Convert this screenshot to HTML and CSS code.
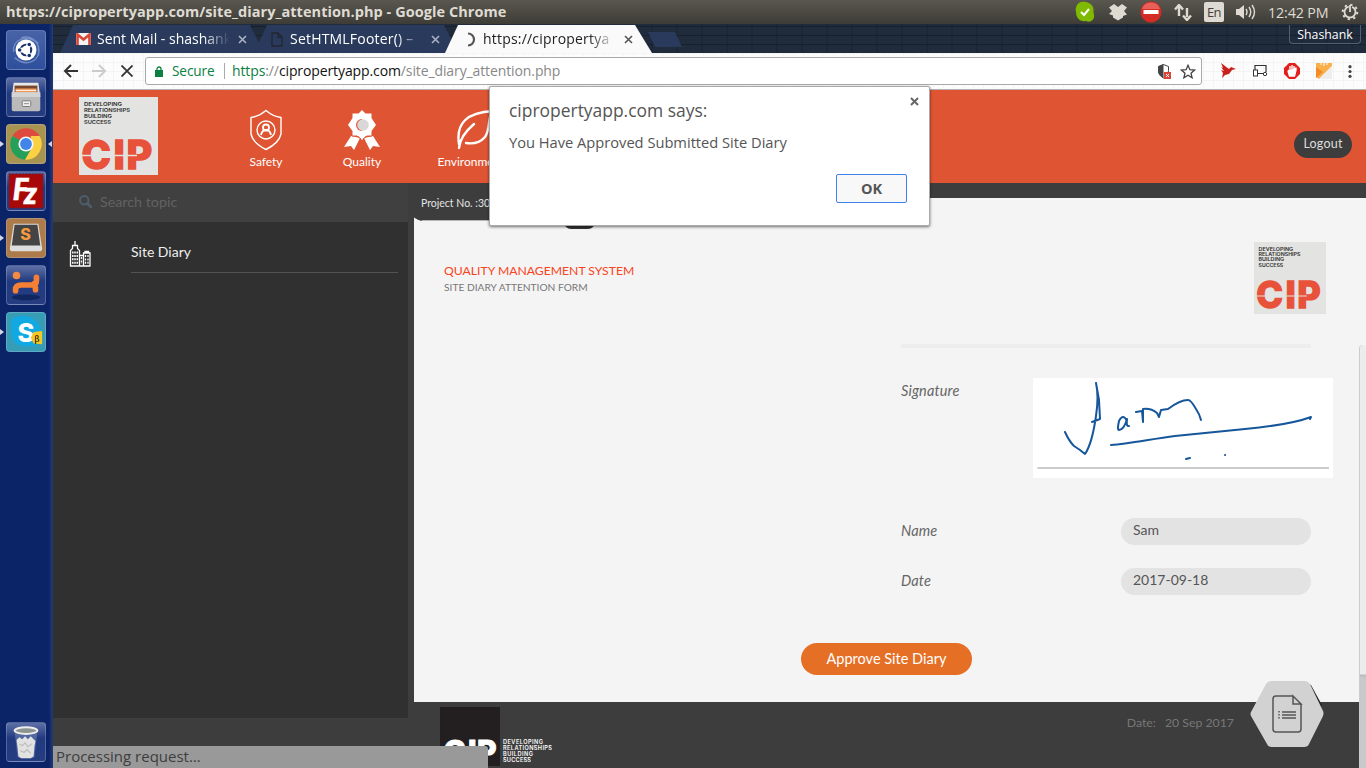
FILE: index.html
```html
<!DOCTYPE html>
<html lang="en">
<head>
<meta charset="utf-8">
<title>Site Diary Attention</title>
<link rel="stylesheet" href="styles.css">
</head>
<body>
<svg class="defs" width="0" height="0" aria-hidden="true">
  <defs>
    <symbol id="cip" viewBox="0 0 79 78">
      <rect width="79" height="78" fill="#e3e3e1"/>
      <g fill="#2b2b2b" font-family="Inter, sans-serif" font-weight="600" font-size="5.4">
        <text x="5" y="9.3" textLength="38" lengthAdjust="spacingAndGlyphs">DEVELOPING</text>
        <text x="5" y="15.1" textLength="46" lengthAdjust="spacingAndGlyphs">RELATIONSHIPS</text>
        <text x="5" y="20.9" textLength="28" lengthAdjust="spacingAndGlyphs">BUILDING</text>
        <text x="5" y="26.7" textLength="27" lengthAdjust="spacingAndGlyphs">SUCCESS</text>
      </g>
      <text x="2.500 34.500 47.500" y="72" fill="#e8513a" stroke="#e8513a" stroke-width="1.400" font-family="Inter, sans-serif" font-weight="800" font-size="39.500">CIP</text>
      <path d="M3 58.500H14M36 58.500H58" stroke="#e3e3e1" stroke-width="1.300"/>
    </symbol>
  </defs>
</svg>

<header class="topbar">
  <div class="window-title">https://cipropertyapp.com/site_diary_attention.php - Google Chrome</div>
  <div class="indicators">
    <svg width="22" height="22" viewBox="0 0 22 22"><path d="M7 1c3-1 10 0 12 5 1 3 0 5 1 8 1 5-4 8-8 6-6 1-10-3-10-9C1 7 3 2 7 1z" fill="#7fba00"/><path d="M7 11l3 3 5-6" fill="none" stroke="#fff" stroke-width="2"/></svg>
    <svg width="20" height="18" viewBox="0 0 20 18"><path d="M6 1l4 3 4-3 5 3.500-3 3.500 3 3.500-4 1.500v1.500l-5 3-5-3V12.500L1 11l3-3L1 4.500z" fill="#dfdbd2"/></svg>
    <svg width="22" height="22" viewBox="0 0 22 22"><circle cx="11" cy="11" r="10.500" fill="#d42b26"/><path d="M2 8a9.500 9.500 0 0 1 18 0z" fill="#e8605a"/><rect x="3.500" y="9" width="15" height="4" fill="#fff"/></svg>
    <svg width="18" height="17" viewBox="0 0 18 17"><path d="M5 12V3M1 5.500L5 1l4 4.500M13 4v9M9 11.500l4 4.500 4-4.500" fill="none" stroke="#dfdbd2" stroke-width="2.400"/></svg>
    <span class="lang">En</span>
    <svg width="20" height="16" viewBox="0 0 20 16"><path d="M0 5h3l5-4v14l-5-4H0z" fill="#dfdbd2"/><path d="M10 5q2 3 0 6M13 3q3.500 5 0 10M16 1q5 7 0 14" fill="none" stroke="#dfdbd2" stroke-width="1.400"/></svg>
    <span class="clock">12:42 PM</span>
    <svg width="18" height="18" viewBox="0 0 18 18" fill="none" stroke="#dfdbd2"><circle cx="9" cy="9" r="5.500" stroke-width="1.800" stroke-dasharray="30.200 4.400" transform="rotate(-67 9 9)"/><circle cx="9" cy="9" r="7.300" stroke-width="2" stroke-dasharray="2.300 3.430"/><path d="M9 2v7" stroke-width="1.800"/></svg>
  </div>
</header>

<div class="desktop">
  <nav class="launcher">
    <div class="tile blue"><svg viewBox="0 0 40 40"><path d="M7 22C5 9 21 3 33 13M33 18c3 13-12 21-25 10M15 7c11-3 21 5 18 19" fill="none" stroke="#8ca2d3" stroke-width="1.500" opacity=".7"/><circle cx="20" cy="20" r="11" fill="#fff"/><circle cx="20" cy="20" r="5.500" fill="none" stroke="#1b3270" stroke-width="2.200"/><path d="M20 20H11M20 20l4.500-8M20 20l4.500 8" stroke="#fff" stroke-width="5"/><circle cx="20" cy="20" r="4" fill="#fff"/><g fill="#1b3270"><circle cx="13.300" cy="20" r="1.900"/><circle cx="23.400" cy="14.200" r="1.900"/><circle cx="23.400" cy="25.800" r="1.900"/></g></svg></div>
    <div class="tile steel"><svg viewBox="0 0 40 40"><path d="M7 5h26l2 15H5z" fill="#e7e7e5"/><path d="M8 8h24v9H8z" fill="#77462e"/><path d="M9 11h22v6H9z" fill="#f19a56"/><path d="M9 13h22" stroke="#fff"/><path d="M5 15h30v18q0 2-2 2H7q-2 0-2-2z" fill="#bababa"/><path d="M5 15h30v5H5z" fill="#d4d4d4"/><rect x="16" y="24" width="9" height="6" rx="1" fill="#eee" stroke="#777"/><path d="M18 27h5" stroke="#888"/></svg></div>
    <div class="tile gold running current"><svg viewBox="0 0 40 40"><path d="M20 20L5.700 11.700A16.500 16.500 0 0 1 34.300 11.700z" fill="#df4a3f"/><path d="M5.700 11.700A16.500 16.500 0 0 0 19 36.500L27 23z" fill="#25a05a"/><path d="M34.300 11.700A16.500 16.500 0 0 1 19 36.500l8-14-2-10.800z" fill="#fcd043"/><circle cx="20" cy="20" r="8" fill="#f6f6f6"/><circle cx="20" cy="20" r="6.200" fill="#4285e8"/></svg></div>
    <div class="tile steel"><svg viewBox="0 0 40 40"><rect x="2" y="2" width="36" height="36" fill="#a90809" stroke="#4f2a54" stroke-dasharray="2 1.500"/><text x="6 18" y="29 34" fill="#fff" stroke="#fff" stroke-width=".7" font-family="Lato, sans-serif" font-weight="900" font-style="italic" font-size="31">Fz</text></svg></div>
    <div class="tile brown running"><svg viewBox="0 0 40 40"><path d="M7 5h26l4 26q0 3-3 3H6q-3 0-3-3z" fill="#ddd"/><path d="M8 6h24l3 22H5z" fill="#444"/><text x="14" y="22" fill="#f29a3d" font-family="Inter, sans-serif" font-weight="800" font-size="17">S</text></svg></div>
    <div class="tile steel"><svg viewBox="0 0 40 40"><ellipse cx="20" cy="33" rx="15" ry="3" fill="#10265f"/><circle cx="10" cy="10" r="4" fill="#f58a42"/><path d="M9 26v-1q0-5 6-5h11q5 0 5-5v-3M28 19q2 1 2 6" fill="none" stroke="#f47f35" stroke-width="6" stroke-linecap="round" stroke-linejoin="round"/></svg></div>
    <div class="tile teal running"><svg viewBox="0 0 40 40"><path d="M10 4c14-4 27 5 26 19 0 10-7 13-14 12C11 37 3 29 5 18 3 10 5 5 10 4z" fill="#12a9e2"/><text x="11" y="30" fill="#fff" font-family="Inter, sans-serif" font-weight="800" font-size="27">S</text><path d="M28 20l9-1v14l-9-1-3-6z" fill="#f5c723"/><text x="29" y="30" font-family="DejaVu Serif, serif" font-size="9">β</text></svg></div>
    <div class="tile steel trash"><svg viewBox="0 0 40 40"><path d="M8 9h24l-3 26q0 2-3 2H14q-3 0-3-2z" fill="#6f82b0" opacity=".6"/><path d="M10 18l3-3 3 2 3-3 3 3 3-3 3 3 2 2-1 5-1 11-3 2H15l-3-2-1-10z" fill="#e2e2e2"/><path d="M13 22l3 2 3-3 3 4 4-3M14 29l4 2 3-3 4 4" fill="none" stroke="#bbb" stroke-width="1.200"/><ellipse cx="20" cy="8" rx="12" ry="3.500" fill="#8c958f" stroke="#eee" stroke-width="2"/></svg></div>
  </nav>

  <main class="browser">
    <div class="tabstrip">
      <div class="tab first"><svg width="15" height="12" viewBox="0 0 15 12"><rect width="15" height="12" rx="1" fill="#f4f4f4"/><path d="M1.500 12V1.500l6 5 6-5V12" fill="none" stroke="#db4437" stroke-width="2.600"/></svg><span class="tab-text">Sent Mail - shashank</span><svg class="x" width="9" height="9" viewBox="0 0 9 9"><path d="M1 1l7 7M8 1L1 8"/></svg></div>
      <div class="tab second"><svg width="15" height="15" viewBox="0 0 15 15"><path d="M3 1h6l4 4v9H3zM9 1v4h4" fill="none" stroke="#22262f" stroke-width="1.300"/></svg><span class="tab-text">SetHTMLFooter() –</span><svg class="x" width="9" height="9" viewBox="0 0 9 9"><path d="M1 1l7 7M8 1L1 8"/></svg></div>
      <div class="tab active"><svg width="15" height="15" viewBox="0 0 15 15"><path d="M6 1.500A6 6 0 0 1 6 13.500" fill="none" stroke="#555" stroke-width="2.200"/></svg><span class="tab-text">https://cipropertya</span><svg class="x" width="9" height="9" viewBox="0 0 9 9"><path d="M1 1l7 7M8 1L1 8"/></svg></div>
      <div class="new-tab"></div>
      <div class="profile">Shashank</div>
    </div>
    <div class="toolbar">
      <svg class="back" width="16" height="14" viewBox="0 0 16 14"><path d="M15 7H2M8 1L2 7l6 6"/></svg>
      <svg class="forward" width="16" height="14" viewBox="0 0 16 14"><path d="M1 7h13M8 1l6 6-6 6"/></svg>
      <svg class="stop" width="12" height="12" viewBox="0 0 12 12"><path d="M.5.500l11 11M11.500.500L.5 11.500"/></svg>
      <div class="omnibox">
        <svg width="8" height="11" viewBox="0 0 8 11"><rect y="4" width="8" height="7" fill="#0b8043"/><path d="M2 5V3a2 2 0 0 1 4 0v2" fill="none" stroke="#0b8043" stroke-width="1.300"/></svg>
        <span class="secure">Secure</span>
        <span class="url"><b>https</b>://<i>cipropertyapp.com</i>/site_diary_attention.php</span>
        <svg class="shield" width="15" height="15" viewBox="0 0 15 15"><path d="M6.500.500l5 2v4q0 5-5 7.500-5-2.500-5-7.500v-4z" fill="#fff" stroke="#444"/><path d="M6.500 0v14Q1 11 1 6.500v-4z" fill="#444"/><rect x="7" y="8" width="7" height="7" fill="#db4437"/><path d="M9 10l3 3M12 10l-3 3" stroke="#fff"/></svg>
        <svg width="16" height="15" viewBox="0 0 16 15"><path d="M8 1.300l1.900 4.400 4.700.4-3.600 3.100 1.100 4.600L8 11.300l-4.100 2.500L5 9.200 1.400 6.100l4.700-.4z" fill="none" stroke="#444" stroke-width="1.300"/></svg>
      </div>
      <div class="extensions">
        <svg width="16" height="16" viewBox="0 0 16 16"><path d="M1 0l8 6 2-2 5 2-4 1-3 4-4 1-3 3 1-5-2-3 3 1-3-4 2 1z" fill="#c9201d"/></svg>
        <svg width="16" height="14" viewBox="0 0 16 14"><path d="M3 6V1.500h11V8M5 9.500h6" fill="none" stroke="#333" stroke-width="1.200"/><rect x="1.500" y="6" width="4" height="6" fill="#fff" stroke="#333"/><circle cx="13" cy="10" r="1.700" fill="#fff" stroke="#333"/></svg>
        <svg width="16" height="16" viewBox="0 0 16 16"><path d="M5 0h6l5 5v6l-5 5H5l-5-5V5z" fill="#e11f1b"/><path d="M4 8l1.500 5h5L12 7V4.500M6 9V3M8 9V2M10 9V3M4 7l2 2" fill="#fff" stroke="#fff" stroke-width="1.400"/></svg>
        <svg width="16" height="16" viewBox="0 0 16 16"><path d="M0 0h16v3L3 16 0 14z" fill="#f9b04a"/><path d="M0 4l7 5-7 6z" fill="#f28b24"/><path d="M5 0v2M8 0v3M11 0v2" stroke="#fff"/><path d="M16 3v13H3z" fill="#eee"/></svg>
        <svg width="4" height="13" viewBox="0 0 4 13" fill="#444"><circle cx="2" cy="1.700" r="1.600"/><circle cx="2" cy="6.500" r="1.600"/><circle cx="2" cy="11.300" r="1.600"/></svg>
      </div>
    </div>

    <div class="page">
      <header class="site-header">
        <svg class="brand" viewBox="0 0 79 78" preserveAspectRatio="none"><use href="#cip"/></svg>
        <div class="nav-item"><svg width="34" height="42" viewBox="0 0 34 42" fill="none" stroke="#fff" stroke-width="1.400"><path d="M17 1.500q7 6 15 7V25q-2 9-15 15.500Q4 34 2 25V8.500q8-1 15-7z"/><circle cx="17" cy="21" r="9"/><circle cx="17" cy="18.500" r="3" stroke-width="1.800"/><path d="M12 26q1-5 5-5t5 5" stroke-width="1.800"/></svg><span>Safety</span></div>
        <div class="nav-item"><svg width="38" height="42" viewBox="0 0 38 42"><path d="M8 27L1 38l7-1 3 4 6-12zM30 27l7 11-7-1-3 4-6-12z" fill="#fff"/><path d="M19 1l3.500 3.500h6V9l4.500 7-4.500 6v5h-5.500L19 31l-4-4H9.500v-5L5 16l4.500-7V4.500h6z" fill="#fff"/><path d="M19 10a6 6 0 0 0 0 12z" fill="#df5432"/><circle cx="20" cy="16" r="5.800" fill="#d8d8d8"/><path d="M9 27h5l4 3M29 27h-5l-4 3" fill="none" stroke="#df5432"/></svg><span>Quality</span></div>
        <div class="nav-item environment"><svg width="42" height="42" viewBox="0 0 42 42" fill="none" stroke="#fff" stroke-width="2.400"><path d="M6 39q1-12 15-24M6 35Q1 4 40 2c-6 5-2 18-8 26q-7 8-19 6" stroke-linecap="round"/></svg><span>Environment</span></div>
        <button class="logout">Logout</button>
      </header>
      <div class="site-body">
        <aside class="sidebar">
          <div class="search"><svg width="13" height="13" viewBox="0 0 13 13"><path d="M8.500 8.500L12 12" stroke="#4d5d6d" stroke-width="2.600" stroke-linecap="round"/><circle cx="5.300" cy="5.300" r="4.200" fill="none" stroke="#4d5d6d" stroke-width="2"/></svg><span>Search topic</span></div>
          <div class="menu"><svg width="22" height="27" viewBox="0 0 22 27" fill="none" stroke="#fff"><path d="M1.500 26V10.500l2-2v-3h5v3l2 2V26zM6 6V1M10.500 15.500h4V26M14.500 26V13h6.500v13M16 12.500v-1h3.500v1M1 26h20.500" stroke-width="1.300"/><path d="M3.800 11.500V24M6 11.500V24M8.300 11.500V24" stroke-width="1.500" stroke-dasharray="2 1.400"/><path d="M12.500 17v7M16.500 15v9M19 15v9" stroke-width="1.300" stroke-dasharray="2 1.400"/></svg><span class="menu-link">Site Diary</span></div>
        </aside>
        <section class="content">
          <div class="project">Project No. :30</div>
          <div class="panel">
            <div class="panel-tab"></div>
            <div class="panel-head"><div><h1>QUALITY MANAGEMENT SYSTEM</h1><h2>SITE DIARY ATTENTION FORM</h2></div><svg class="panel-brand" viewBox="0 0 79 78" preserveAspectRatio="none"><use href="#cip"/></svg></div>
            <div class="form">
              <div class="rule"></div>
              <div class="row signature-row"><label>Signature</label><svg class="signature" width="300" height="100" viewBox="0 0 300 100" fill="none" stroke="#16569b" stroke-width="2" stroke-linecap="round" stroke-linejoin="round"><rect width="300" height="100" fill="#fff" stroke="none"/><path d="M4.500 90h291.500" stroke="#ccc" stroke-linecap="butt"/><path d="M32 54q4 9 9 14l6 4 5 4q7-10 11-38 3-20 0-33l3 17 1 19-8 3M94 43q-4-8-8 0-2 9 0 9 5 0 8-11-1 8 2 7M103 34l6-1 1 11V31q8-1 14 4l2 4 2-7 7-1q12-9 20-9 3 0 8 9 4 6 5 11M78 67c18-1 40-6 64-9l70-7c32-3 50-6 66-12l-1 2M153 81l4-1"/><path d="M192 77h.1"/></svg></div>
              <div class="row name-row"><label>Name</label><div class="field">Sam</div></div>
              <div class="row"><label>Date</label><div class="field">2017-09-18</div></div>
            </div>
            <button class="approve">Approve Site Diary</button>
          </div>
          <footer class="footer">
            <svg class="footer-brand" width="120" height="61" viewBox="0 0 120 61"><rect width="60" height="59" fill="#231f20"/><text x="3.500 28 37" y="55" fill="#fff" stroke="#fff" font-family="Inter, sans-serif" font-weight="800" font-size="30">CIP</text><g fill="#fff" font-family="Inter, sans-serif" font-weight="600" font-size="5.600"><text x="63" y="37" textLength="40">DEVELOPING</text><text x="63" y="43" textLength="49">RELATIONSHIPS</text><text x="63" y="49" textLength="30">BUILDING</text><text x="63" y="55" textLength="28">SUCCESS</text></g></svg>
            <div class="footer-date"><span>Date:</span><span>20 Sep 2017</span></div>
          </footer>
        </section>
        <div class="scrollbar"><div class="scroll-thumb"></div></div>
        <svg class="notes" width="76" height="68" viewBox="0 0 76 68"><path d="M58 4l3 1 11 20-1 3-14-23z" fill="#292929"/><path d="M21 1h34q3 0 5 3l13 27q1 2 0 5L59 64q-1 3-5 3H22q-4 0-5-3L1 36q-1-2 0-4L16 4q2-3 5-3z" fill="#d2d2d2"/><path d="M26 16h17l8 8v25q0 3-3 3H26q-3 0-3-3V19q0-3 3-3zM43 16v8h8zM32 32h14M32 35h14M32 38h14" fill="none" stroke="#555" stroke-width="1.500"/><path d="M29 31v9" stroke="#555" stroke-width="1.500" stroke-dasharray="1.500"/></svg>
      </div>
      <div class="status">Processing request…</div>
    </div>
    <div class="dialog" role="dialog">
      <svg class="close" width="9" height="9" viewBox="0 0 9 9"><path d="M1 1l7 7M8 1L1 8"/></svg>
      <div class="dialog-title">cipropertyapp.com says:</div>
      <p>You Have Approved Submitted Site Diary</p>
      <button>OK</button>
    </div>
  </main>
</div>
</body>
</html>
```
FILE: styles.css
```css
* { box-sizing: border-box; }
body { margin: 0; width: 1366px; height: 768px; overflow: hidden; display: flex; flex-direction: column; font: 14px "Open Sans", "Noto Sans", sans-serif; }
svg { flex: none; display: block; }
button { border: 0; padding: 0; font: inherit; }
.defs { position: absolute; }

.topbar { height: 24px; flex: none; display: flex; align-items: center; justify-content: space-between; padding: 0 7px 0 6px; background: linear-gradient(#59574f, #3d3c37); color: #dfdbd2; }
.window-title { font-weight: 700; font-size: 14.500px; letter-spacing: .05px; line-height: 22px; white-space: nowrap; }
.indicators { display: flex; align-items: center; gap: 12px; }
.lang { width: 20px; height: 20px; background: #dfdbd2; color: #44423d; border-radius: 2px; font-size: 13px; line-height: 20px; text-align: center; letter-spacing: -.5px; }
.clock { font-size: 14.300px; letter-spacing: -.15px; width: 61px; white-space: nowrap; }

.desktop { display: flex; height: 744px; }
.launcher { width: 53px; flex: none; padding: 6px 0 6px 6px; background: linear-gradient(90deg, #0b2468, #0a2467 92%, #263c78); display: flex; flex-direction: column; gap: 7px; }
.tile { width: 40px; height: 40px; position: relative; border-radius: 4px; border: 1px solid rgba(190, 200, 230, .3); }
.tile svg { width: 38px; height: 38px; }
.blue { background: linear-gradient(#4963a7, #2e4f9c); }
.steel { background: linear-gradient(#5e70a5, #223a80 40%, #253c80); }
.gold { background: #a89450; }
.brown { background: #ac7b49; }
.teal { background: #379cb5; }
.running::before { content: ""; position: absolute; left: -7px; top: 16px; border: 3px solid transparent; border-left: 4px solid #d4d7e1; border-right: 0; }
.current::after { content: ""; position: absolute; right: -7px; top: 16px; border: 3px solid transparent; border-right: 4px solid #d4d7e1; border-left: 0; }
.trash { margin-top: auto; }

.browser { width: 1313px; position: relative; display: flex; flex-direction: column; }
.tabstrip { height: 29px; flex: none; display: flex; align-items: flex-end; padding-left: 7px; background-color: #1d2736; background-image: repeating-linear-gradient(0deg, transparent 0 8px, #18202d 8px 9px), repeating-linear-gradient(90deg, #202b3b 0 23px, #1d2736 23px 25px); }
.tab { width: 204px; height: 28px; flex: none; margin-right: -10px; padding: 0 16px; display: flex; align-items: center; color: #fff; background: #2a3a5c; clip-path: polygon(0 100%, 13px 0, 190px 0, 100% 100%); }
.tab .x { margin-left: 8px; stroke: #aab2c2; stroke-width: 1.600; fill: none; }
.tab-text { width: 133px; margin-left: 6px; white-space: nowrap; overflow: hidden; font-size: 14px; line-height: 20px; -webkit-mask-image: linear-gradient(90deg, #000 80%, transparent 100%); mask-image: linear-gradient(90deg, #000 80%, transparent 100%); }
.second { padding-left: 15px; }
.second .tab-text { letter-spacing: .2px; }
.active { width: 207px; margin-left: -3px; padding-left: 17px; background: #fafafa; color: #222; z-index: 1; }
.active .x { stroke: #555; }
.active .tab-text { letter-spacing: .2px; }
.new-tab { width: 34px; height: 15px; margin: 0 0 6px 6px; background: #2a3a5c; clip-path: polygon(0 0, 27px 0, 100% 100%, 7px 100%); }
.profile { margin: 0 5px 9px auto; width: 72px; height: 19px; border: 1px solid #526071; border-top: 0; border-radius: 0 0 4px 4px; color: #fff; font-size: 12.300px; line-height: 20px; text-align: center; }

.toolbar { height: 37px; flex: none; display: flex; align-items: center; padding: 0 14px 0 10px; border-bottom: 1px solid #b3b3b3; background-color: #fcfcfc; background-image: linear-gradient(#f4f4f4 1px, transparent 1px), linear-gradient(90deg, #f4f4f4 1px, transparent 1px); background-size: 10px 9px; }
.toolbar > svg { fill: none; stroke: #333; stroke-width: 2; }
.toolbar > .forward { stroke: #ccc; margin-left: 12px; }
.toolbar > .stop { margin-left: 14px; stroke-width: 1.800; }
.omnibox { width: 1057px; height: 28px; margin-left: 12px; border: 1px solid #a9a9a9; border-radius: 3px; background: #fff; display: flex; align-items: center; padding: 0 5px 0 9px; white-space: nowrap; }
.secure { color: #0b8043; margin-left: 9px; padding-right: 9px; width: 53px; border-right: 1px solid #aaa; line-height: 16px; font-size: 13.600px; letter-spacing: -.1px; }
.url { margin-left: 7px; color: #888; font-size: 14px; letter-spacing: -.11px; line-height: 20px; }
.url b { font-weight: 400; color: #0b8043; }
.url i { font-style: normal; color: #111; }
.shield { margin-left: auto; margin-right: 8px; }
.extensions { display: flex; align-items: center; gap: 16px; margin-left: auto; }
.extensions svg:first-child { margin-left: -12px; }

.page { height: 678px; position: relative; background: #3d3d3d; font-family: Lato, sans-serif; }
.site-header { height: 93px; background: #df5432; display: flex; align-items: flex-start; padding: 7px 14px 0 26px; color: #fff; }
.brand { width: 79px; height: 78px; }
.nav-item { width: 96px; padding-top: 12px; display: flex; flex-direction: column; align-items: center; font-size: 12px; line-height: 15px; gap: 3px; }
.brand + .nav-item { margin-left: 60px; }
.environment { margin-left: 13px; }
.environment svg { margin-left: 6px; }
.logout { width: 58px; height: 27px; margin: 34px 0 0 auto; border-radius: 14px; background: #3d3d3d; color: #ddd; font-size: 12.500px; line-height: 26px; padding-bottom: 1px; letter-spacing: .2px; }
.site-body { display: flex; position: relative; }
.sidebar { width: 355px; flex: none; }
.search { height: 39px; padding: 0 0 2px 26px; background: #404040; display: flex; align-items: center; gap: 8px; color: #626262; font-size: 14.300px; }
.search span { margin-top: -1px; }
.menu { height: 496px; padding: 18px 10px 0 16px; background: #303030; display: flex; align-items: flex-start; color: #eee; font-size: 14px; }
.menu-link { flex: 1; margin-left: 40px; height: 33px; border-bottom: 1px solid #535353; line-height: 23px; }
.content { width: 951px; flex: none; padding: 15px 0 0 6px; position: relative; }
.project { position: absolute; left: 0; top: 0; width: 300px; height: 38px; padding: 0 0 0 13px; background: #3d3d3d; border-radius: 0 0 0 16px; color: #e4e4e4; font-size: 10.500px; line-height: 41px; z-index: 1; }
.project::after { content: ""; position: absolute; left: 14px; right: 0; bottom: 0; height: 1px; background: #b6b6b6; }
.panel { width: 945px; height: 504px; background: #f4f4f4; padding: 44px 33px 0 30px; position: relative; }
.panel-tab { position: absolute; left: 150px; top: 10px; width: 31px; height: 21px; border-radius: 7px; background: #333; }
.panel-head { display: flex; justify-content: space-between; height: 102px; }
h1 { margin: 20px 0 0; color: #f84322; font-size: 12.200px; line-height: 18px; font-weight: 400; }
h2 { margin: 0; color: #777; font-size: 10.200px; line-height: 15px; font-weight: 400; }
.panel-brand { width: 72px; height: 72px; }
.form { margin-left: 457px; width: 410px; }
.rule { height: 4px; background: #ededed; }
.row { height: 50px; display: flex; justify-content: space-between; align-items: flex-start; color: #666; font-size: 14px; line-height: 27px; }
.row label { font-style: italic; font-size: 14.500px; line-height: 26px; letter-spacing: .15px; }
.signature-row { height: 140px; width: 432px; margin-top: 30px; }
.field { width: 190px; height: 27px; border-radius: 14px; padding-left: 12px; background: #e3e3e3; line-height: 23px; color: #555; }
.approve { display: block; width: 171px; height: 32px; margin: 25px 0 0 357px; padding-bottom: 2px; border-radius: 16px; background: #e66f26; color: #fff; font-size: 14.500px; }
.footer { height: 66px; display: flex; padding: 5px 125px 0 26px; justify-content: space-between; }
.footer-date { color: #777; font-size: 12.300px; padding-top: 8px; display: flex; gap: 9px; }
.scrollbar { width: 7px; height: 570px; background: #f4f4f4; margin-top: 15px; position: relative; }
.scroll-thumb { margin-top: 147px; height: 423px; border-left: 1px solid #ccc; border-radius: 5px 5px 0 0; background: linear-gradient(#ececec 0 329px, #bbb 330px, #c9c8ca 333px); }
.notes { position: absolute; left: 1197px; top: 497px; }
.status { position: absolute; left: 0; bottom: 0; width: 435px; height: 22px; padding-left: 3px; background: #999; border-radius: 0 3px 0 0; color: #3e3e3e; font: 15px/20px "Open Sans", sans-serif; }
.dialog { position: absolute; left: 436px; top: 62px; width: 441px; height: 140px; border: 1px solid #aaa; border-radius: 2px; background: #fff; box-shadow: 0 1px 3px rgba(0, 0, 0, .55); padding: 10px 22px 0 19px; color: #555; display: flex; flex-direction: column; z-index: 2; }
.dialog-title { font-size: 17.450px; line-height: 27px; }
.dialog p { margin: 8px 0 0; font-size: 14.700px; line-height: 20px; letter-spacing: -.02px; }
.dialog button { width: 71px; height: 29px; margin: 22px 0 0 auto; border: 1px solid #4080ef; border-radius: 2px; background: #f8f8f8; color: #555; font-size: 14.500px; font-weight: 700; }
.close { position: absolute; right: 10px; top: 10px; fill: none; stroke: #666; stroke-width: 2; }
```
